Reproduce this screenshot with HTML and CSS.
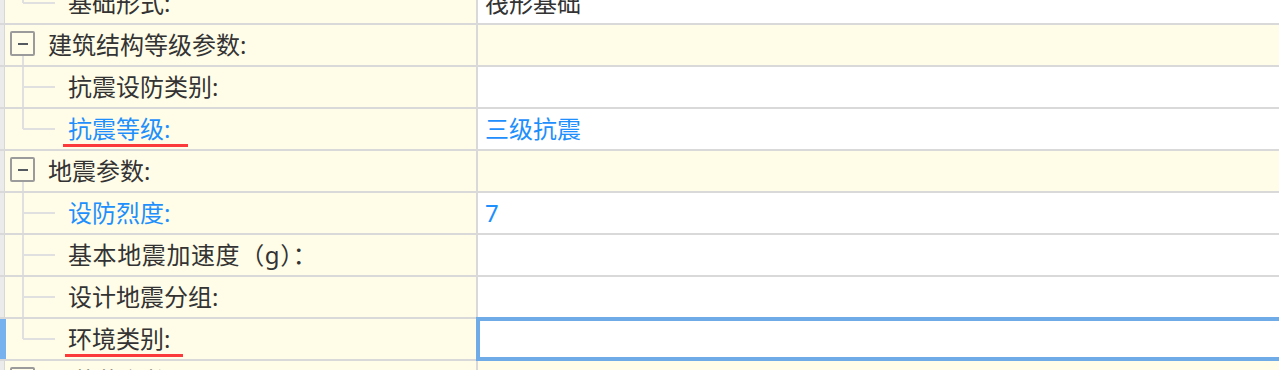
FILE: index.html
```html
<!DOCTYPE html>
<html lang="zh-CN">
<head>
<meta charset="utf-8">
<title>属性</title>
<link rel="stylesheet" href="styles.css">
</head>
<body>
<div class="view">
  <div class="rows">
    <div class="row child">
      <div class="label"><span class="indent last"></span><span class="text">基础形式:</span></div>
      <div class="value"><span class="text">筏形基础</span></div>
    </div>
    <div class="row group">
      <div class="label"><span class="gindent"><span class="toggle"></span></span><span class="text">建筑结构等级参数:</span></div>
      <div class="value"></div>
    </div>
    <div class="row child">
      <div class="label"><span class="indent"></span><span class="text">抗震设防类别:</span></div>
      <div class="value"></div>
    </div>
    <div class="row child">
      <div class="label"><span class="indent last"></span><span class="text blue marked mark-a">抗震等级:</span></div>
      <div class="value"><span class="text blue">三级抗震</span></div>
    </div>
    <div class="row group">
      <div class="label"><span class="gindent"><span class="toggle"></span></span><span class="text">地震参数:</span></div>
      <div class="value"></div>
    </div>
    <div class="row child">
      <div class="label"><span class="indent"></span><span class="text blue">设防烈度:</span></div>
      <div class="value"><span class="text blue">7</span></div>
    </div>
    <div class="row child">
      <div class="label"><span class="indent"></span><span class="text wide">基本地震加速度（g）：</span></div>
      <div class="value"></div>
    </div>
    <div class="row child">
      <div class="label"><span class="indent"></span><span class="text">设计地震分组:</span></div>
      <div class="value"></div>
    </div>
    <div class="row child selected">
      <div class="label"><span class="indent last"></span><span class="text marked mark-b">环境类别:</span></div>
      <div class="value editing"><span class="editor"></span></div>
    </div>
    <div class="row group">
      <div class="label"><span class="gindent"><span class="toggle"></span></span><span class="text">风荷载参数:</span></div>
      <div class="value"></div>
    </div>
  </div>
</div>
</body>
</html>
```

FILE: styles.css
```css
html, body {
  margin: 0;
  padding: 0;
  background: #ffffff;
}

.view {
  width: 1279px;
  height: 370px;
  overflow: hidden;
  font-family: "Noto Sans", "Noto Sans CJK SC", sans-serif;
  font-size: 24px;
  color: #333333;
}

.rows {
  margin-top: -17px;
}

.row {
  display: grid;
  grid-template-columns: 478px 1fr;
  height: 42px;
  box-sizing: border-box;
  border-bottom: 2px solid #d9d9d9;
}

.label {
  display: flex;
  align-items: stretch;
  box-sizing: border-box;
  border-right: 2px solid #d9d9d9;
  background: linear-gradient(to right, #ebebeb 0 4px, #d7d7d7 4px 5px, #fffde8 5px);
}

.row.selected .label {
  background: linear-gradient(to right, #78b2ee 0 6px, #fffde8 6px);
}

.value {
  display: flex;
  align-items: stretch;
  background: #ffffff;
}

.row.group .value {
  background: #fffde8;
}

.text {
  line-height: 40px;
  white-space: nowrap;
}

.wide {
  letter-spacing: 0.6px;
}

.value .text {
  padding-left: 7px;
}

.blue {
  color: #1e8ffc;
}

.indent {
  flex: 0 0 68px;
  background:
    linear-gradient(#e0e0e0, #e0e0e0) 22px 0 / 2px 100% no-repeat,
    linear-gradient(#e0e0e0, #e0e0e0) 23px 19px / 32px 2px no-repeat;
}

.indent.last {
  background:
    linear-gradient(#e0e0e0, #e0e0e0) 22px 0 / 2px 20px no-repeat,
    linear-gradient(#e0e0e0, #e0e0e0) 23px 19px / 32px 2px no-repeat;
}

.gindent {
  flex: 0 0 48px;
  display: flex;
  align-items: flex-start;
  padding-top: 6px;
  box-sizing: border-box;
  background: linear-gradient(#e0e0e0, #e0e0e0) 22px 31px / 2px 9px no-repeat;
}

.toggle {
  margin-left: 10px;
  width: 25px;
  height: 25px;
  box-sizing: border-box;
  border: 2px solid #9b9b9b;
  border-radius: 2px;
  display: flex;
  align-items: center;
  justify-content: center;
}

.toggle::before {
  content: "";
  display: block;
  width: 10px;
  height: 2px;
  background: #555a60;
}

.marked {
  position: relative;
}

.marked::after {
  content: "";
  position: absolute;
  top: 35px;
  height: 3px;
  background: #fb3b3b;
}

.mark-a::after {
  left: -5px;
  width: 125px;
}

.mark-b::after {
  left: -3px;
  width: 118px;
}

.editing {
  position: relative;
}

.editor {
  position: absolute;
  top: -2px;
  bottom: -2px;
  left: -2px;
  right: -10px;
  border: 4px solid #6eabe7;
  background: #ffffff;
}
```
